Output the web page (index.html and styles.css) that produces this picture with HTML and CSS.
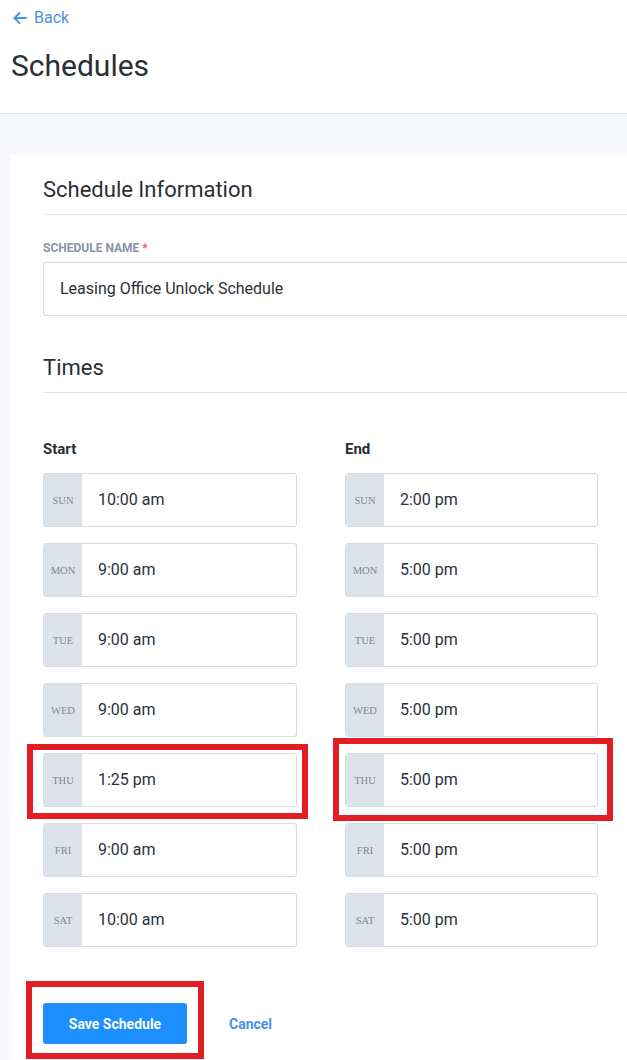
FILE: index.html
```html
<!DOCTYPE html>
<html>
<head>
<meta charset="utf-8">
<link rel="stylesheet" href="styles.css">
</head>
<body>
<header class="page-header">
  <a class="back-link" href="#">
    <svg class="back-icon" width="14" height="14" viewBox="0 0 14 14" fill="none" stroke="currentColor" stroke-width="1.8" stroke-linecap="round" stroke-linejoin="round"><path d="M13 7H1.5"/><path d="M6.5 2L1.5 7l5 5"/></svg>
    <span>Back</span>
  </a>
  <h1 class="page-title">Schedules</h1>
</header>
<main class="content">
  <section class="card">
    <h2 class="section-title">Schedule Information</h2>
    <label class="field-label">Schedule Name <span class="req">*</span></label>
    <div class="text-input">Leasing Office Unlock Schedule</div>

    <h2 class="section-title times-title">Times</h2>
    <div class="times-grid">
      <div class="col">
        <div class="col-label">Start</div>
        <div class="time-row"><span class="day">SUN</span><span class="time">10:00 am</span></div>
        <div class="time-row"><span class="day">MON</span><span class="time">9:00 am</span></div>
        <div class="time-row"><span class="day">TUE</span><span class="time">9:00 am</span></div>
        <div class="time-row"><span class="day">WED</span><span class="time">9:00 am</span></div>
        <div class="time-row"><span class="day">THU</span><span class="time">1:25 pm</span><span class="mark mark-start"></span></div>
        <div class="time-row"><span class="day">FRI</span><span class="time">9:00 am</span></div>
        <div class="time-row"><span class="day">SAT</span><span class="time">10:00 am</span></div>
      </div>
      <div class="col">
        <div class="col-label">End</div>
        <div class="time-row"><span class="day">SUN</span><span class="time">2:00 pm</span></div>
        <div class="time-row"><span class="day">MON</span><span class="time">5:00 pm</span></div>
        <div class="time-row"><span class="day">TUE</span><span class="time">5:00 pm</span></div>
        <div class="time-row"><span class="day">WED</span><span class="time">5:00 pm</span></div>
        <div class="time-row"><span class="day">THU</span><span class="time">5:00 pm</span><span class="mark mark-end"></span></div>
        <div class="time-row"><span class="day">FRI</span><span class="time">5:00 pm</span></div>
        <div class="time-row"><span class="day">SAT</span><span class="time">5:00 pm</span></div>
      </div>
    </div>

    <div class="actions">
      <button class="btn-primary">Save Schedule<span class="mark mark-btn"></span></button>
      <a class="btn-link" href="#">Cancel</a>
    </div>
  </section>
</main>
</body>
</html>
```

FILE: styles.css
```css
html, body {
  margin: 0;
  padding: 0;
}
body {
  font-family: Roboto, "Liberation Sans", Arial, sans-serif;
  color: #2b2f36;
  background: #f6f8fc;
  overflow: hidden;
  width: 627px;
  height: 1060px;
}
.page-header {
  background: #ffffff;
  padding: 8px 11px 29px 11px;
  border-bottom: 1px solid #e3e7ee;
  height: 76px;
}
.back-link {
  display: flex;
  align-items: center;
  gap: 7px;
  color: #4a90e2;
  text-decoration: none;
  font-size: 16px;
  line-height: 20px;
  padding-left: 2px;
}
.back-icon {
  display: block;
}
.page-title {
  margin: 20px 0 0 0;
  font-size: 30px;
  line-height: 36px;
  font-weight: 400;
  color: #2b2f36;
}
.content {
  padding: 40px 0 0 10px;
}
.card {
  background: #ffffff;
  width: 617px;
  padding: 22px 0 40px 33px;
  box-sizing: border-box;
  min-height: 920px;
}
.section-title {
  margin: 0;
  font-size: 22px;
  line-height: 28px;
  font-weight: 400;
  color: #2b2f36;
  padding-bottom: 10px;
  border-bottom: 1px solid #dfe4ea;
}
.field-label {
  display: block;
  margin-top: 26px;
  font-size: 12px;
  line-height: 14px;
  font-weight: 700;
  color: #8a93a3;
  text-transform: uppercase;
}
.req {
  color: #e5566a;
}
.text-input {
  margin-top: 7px;
  margin-right: -3px;
  height: 51px;
  border: 1px solid #d4dbe5;
  border-right: none;
  border-radius: 3px 0 0 3px;
  padding-left: 16px;
  padding-bottom: 1px;
  display: flex;
  align-items: center;
  font-size: 16px;
  line-height: 20px;
  color: #2b2f36;
}
.times-title {
  margin-top: 38px;
}
.times-grid {
  display: grid;
  grid-template-columns: 254px 253px;
  column-gap: 48px;
  margin-top: 47px;
}
.col {
  display: flex;
  flex-direction: column;
  gap: 16px;
}
.col-label {
  font-size: 15px;
  line-height: 18px;
  font-weight: 700;
  color: #2b2f36;
  margin-bottom: -1px;
}
.time-row {
  position: relative;
  height: 54px;
  box-sizing: border-box;
  border: 1px solid #d4dbe5;
  border-radius: 3px;
  display: flex;
  align-items: stretch;
  background: #ffffff;
}
.day {
  width: 38px;
  background: #dde3ea;
  display: flex;
  align-items: center;
  justify-content: center;
  font-family: "Liberation Serif", "DejaVu Serif", serif;
  font-size: 10.5px;
  color: #7d879a;
  border-radius: 2px 0 0 2px;
}
.time {
  display: flex;
  align-items: center;
  padding-left: 16px;
  padding-bottom: 2px;
  font-size: 16px;
  color: #2b3140;
}
.actions {
  display: flex;
  align-items: center;
  margin-top: 56px;
}
.btn-primary {
  position: relative;
  width: 144px;
  height: 41px;
  border: none;
  border-radius: 3px;
  background: #1e8fff;
  color: #ffffff;
  font-family: Roboto, "Liberation Sans", Arial, sans-serif;
  font-size: 14px;
  font-weight: 700;
  padding: 0;
}
.btn-link {
  margin-left: 42px;
  font-size: 14px;
  font-weight: 700;
  color: #4a8fe8;
  text-decoration: none;
}
.mark {
  position: absolute;
  border: 6px solid #e21d23;
  pointer-events: none;
}
.mark-start {
  left: -17px;
  top: -10px;
  right: -12px;
  bottom: -13px;
}
.mark-end {
  left: -13px;
  top: -16px;
  right: -16px;
  bottom: -15px;
}
.mark-btn {
  left: -17px;
  top: -22px;
  right: -17px;
  bottom: -15px;
}
```
